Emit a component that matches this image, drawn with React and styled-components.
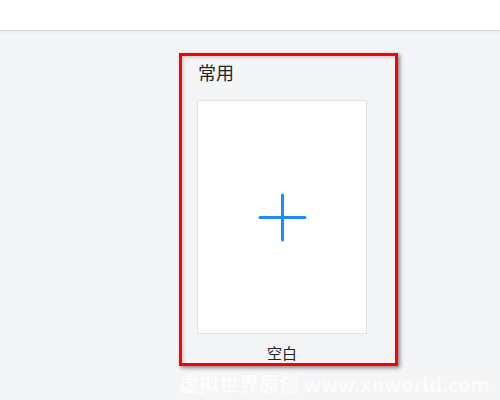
import React from "react";
import styled, { createGlobalStyle } from "styled-components";

const Global = createGlobalStyle`
  html, body { margin: 0; padding: 0; }
  body {
    background: #f4f5f7;
    font-family: "Noto Sans CJK SC", "Noto Sans", sans-serif;
    width: 500px;
    height: 400px;
    overflow: hidden;
  }
`;

const Page = styled.div`
  position: relative;
  width: 500px;
  height: 400px;
  display: flex;
  flex-direction: column;
`;

const Header = styled.header`
  height: 30px;
  background: #ffffff;
  border-bottom: 1px solid #d8d8d8;
  box-shadow: 0 1px 3px rgba(0, 0, 0, 0.08);
  flex: none;
`;

const Main = styled.main`
  flex: 1;
  padding: 22px 0 0 179px;
`;

const Highlight = styled.section`
  box-sizing: border-box;
  width: 219px;
  height: 313px;
  border: 3px solid #ff0000;
  box-shadow: 2px 2px 4px rgba(0, 0, 0, 0.45), inset 2px 2px 3px rgba(0, 0, 0, 0.15);
  display: flex;
  flex-direction: column;
  padding: 4px 0 0 15px;
`;

const Title = styled.div`
  font-size: 18px;
  line-height: 24px;
  color: #222;
  padding-left: 1px;
`;

const Template = styled.div`
  width: 170px;
  display: flex;
  flex-direction: column;
  align-items: center;
  margin-top: 16px;
`;

const Card = styled.div`
  width: 168px;
  height: 232px;
  background: #ffffff;
  border: 1px solid #e2e2e2;
  display: flex;
  align-items: center;
  justify-content: center;
`;

const Label = styled.div`
  font-size: 15px;
  line-height: 20px;
  color: #222;
  margin-top: 9px;
`;

const Watermark = styled.div`
  position: absolute;
  left: 179px;
  top: 371px;
  font-family: "Noto Sans CJK SC", "Noto Sans", sans-serif;
  font-weight: 700;
  font-size: 20px;
  line-height: 26px;
  color: rgba(255, 255, 255, 0.75);
  white-space: nowrap;
`;

const Plus = () => (
  <svg width="49" height="49" viewBox="0 0 49 49">
    <path d="M24.5 2 V47 M2 24.5 H47" stroke="#1a8cff" strokeWidth="3" strokeLinecap="round" fill="none" />
  </svg>
);

export default function App() {
  return (
    <>
      <Global />
      <Page>
        <Header />
        <Main>
          <Highlight>
            <Title>常用</Title>
            <Template>
              <Card>
                <Plus />
              </Card>
              <Label>空白</Label>
            </Template>
          </Highlight>
        </Main>
        <Watermark>虚拟世界原创 www.xnworld.com</Watermark>
      </Page>
    </>
  );
}
